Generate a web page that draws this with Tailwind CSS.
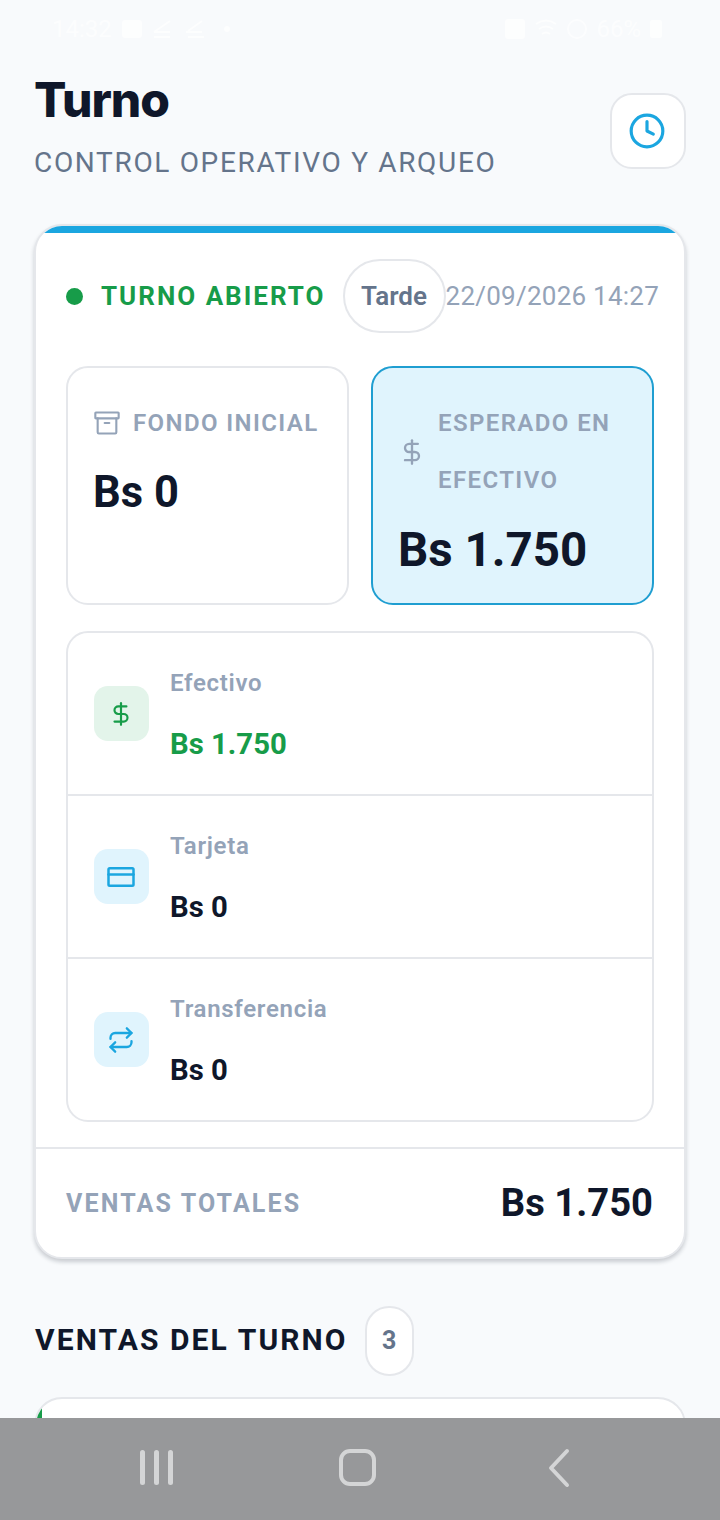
<!DOCTYPE html>
<html lang="es">
<head>
    <meta charset="UTF-8">
    <meta name="viewport" content="width=device-width, initial-scale=1.0">
    <title>Turno</title>
    <script src="https://cdn.jsdelivr.net/npm/@tailwindcss/browser@4"></script>
</head>
<body class="bg-[#f8fafc] font-['Roboto',sans-serif] text-[#0f172a]">
<div class="relative w-[720px] h-[1520px] overflow-hidden">
    <!-- Status bar -->
    <div class="flex items-center justify-between h-[58px] pl-[52px] pr-[58px] text-white/70 text-[24px]">
        <div class="flex items-center gap-[10px]">
            <span>14:32</span>
            <span class="w-[20px] h-[18px] bg-white/70 rounded-[3px]"></span>
            <svg class="w-[22px] h-[22px]" viewBox="0 0 22 22" fill="none" stroke="currentColor" stroke-width="2"><path d="M2 14 18 3M2 14h16M2 19h16"/></svg>
            <svg class="w-[22px] h-[22px]" viewBox="0 0 22 22" fill="none" stroke="currentColor" stroke-width="2"><path d="M4 13 18 3M2 14h16M4 19h16"/></svg>
            <span class="ml-[8px] w-[6px] h-[6px] rounded-full bg-white/70"></span>
        </div>
        <div class="flex items-center gap-[9px]">
            <span class="w-[20px] h-[20px] bg-white/70 rounded-[3px]"></span>
            <svg class="w-[24px] h-[22px]" viewBox="0 0 24 22" fill="none" stroke="currentColor" stroke-width="2"><path d="M2 6q10-7 20 0M5 11q7-5 14 0M8 16q4-3 8 0"/></svg>
            <span class="w-[20px] h-[20px] rounded-full border-2 border-white/60"></span>
            <span>66%</span>
            <span class="w-[12px] h-[18px] bg-white/70 rounded-[2px]"></span>
        </div>
    </div>

    <main class="px-[34px]">
        <!-- Header -->
        <header class="flex justify-between pt-[13px]">
            <div>
                <h1 class="text-[48px] leading-[58px] font-extrabold tracking-[-1px] font-['Inter',sans-serif]">Turno</h1>
                <p class="mt-[17px] text-[28px] leading-[33px] tracking-[1.67px] text-[#64748b] whitespace-nowrap">CONTROL OPERATIVO Y ARQUEO</p>
            </div>
            <button class="mt-[22px] w-[76px] h-[76px] rounded-[22px] bg-white border-2 border-[#e5e7eb] flex items-center justify-center">
                <svg class="mr-[2px] w-[38px] h-[38px] text-[#1ba6e0]" viewBox="0 0 24 24" fill="none" stroke="currentColor" stroke-width="2" stroke-linecap="round" stroke-linejoin="round"><circle cx="12" cy="12" r="10"/><path d="M12 6v6l4 2"/></svg>
            </button>
        </header>

        <!-- Shift card -->
        <section class="mt-[45px] rounded-[28px] bg-white border-2 border-[#e5e7eb] shadow-[0_3px_4px_rgba(15,23,42,0.2)] overflow-hidden">
            <div class="h-[7px] bg-[#1ba6e0]"></div>
            <div class="px-[30px]">
                <div class="flex items-center mt-[26px] h-[74px]">
                    <span class="shrink-0 w-[17px] h-[17px] rounded-full bg-[#179c49]"></span>
                    <span class="ml-[18px] text-[26px] font-bold tracking-[2px] text-[#179c49] whitespace-nowrap">TURNO ABIERTO</span>
                    <span class="shrink-0 ml-[17px] w-[103px] h-[74px] rounded-[37px] border-2 border-[#e5e7eb] flex items-center justify-center text-[26px] font-semibold text-[#64748b]">Tarde</span>
                    <span class="text-[26px] tracking-[0.25px] text-[#94a3b8] whitespace-nowrap">22/09/2026 14:27</span>
                </div>

                <div class="grid grid-cols-2 gap-[22px] mt-[33px]">
                    <div class="h-[239px] rounded-[22px] border-2 border-[#e5e7eb] p-[26px]">
                        <div class="flex items-center gap-[12px] h-[56px] mt-[1px]">
                            <svg class="-ml-[1px] w-[28px] h-[28px] shrink-0 text-[#94a3b8]" viewBox="0 0 24 24" fill="none" stroke="currentColor" stroke-width="1.8" stroke-linecap="round" stroke-linejoin="round"><rect x="2" y="3" width="20" height="5" rx="0.5"/><path d="M4 8v12a1 1 0 0 0 1 1h14a1 1 0 0 0 1-1V8"/><path d="M10 12h4"/></svg>
                            <span class="text-[24px] font-semibold tracking-[1.4px] text-[#94a3b8] whitespace-nowrap">FONDO INICIAL</span>
                        </div>
                        <p class="-ml-[1px] mt-[17px] text-[43.5px] leading-[50px] font-bold">Bs 0</p>
                    </div>
                    <div class="h-[239px] rounded-[22px] border-2 border-[#1f9ed1] bg-[#e0f4fd] px-[26px] pt-[27px]">
                        <div class="flex items-center gap-[11px]">
                            <svg class="-ml-[1px] w-[28px] h-[28px] shrink-0 text-[#94a3b8]" viewBox="0 0 24 24" fill="none" stroke="currentColor" stroke-width="2" stroke-linecap="round" stroke-linejoin="round"><path d="M12 2v20"/><path d="M17 5H9.5a3.5 3.5 0 0 0 0 7h5a3.5 3.5 0 0 1 0 7H6"/></svg>
                            <span class="ml-[1px] text-[24px] leading-[57px] font-semibold tracking-[1.4px] text-[#94a3b8]">ESPERADO EN EFECTIVO</span>
                        </div>
                        <p class="-ml-[1px] mt-[14px] text-[47.5px] leading-[54px] font-bold">Bs 1.750</p>
                    </div>
                </div>

                <!-- Payment methods -->
                <div class="mt-[26px] rounded-[22px] border-2 border-[#e5e7eb]">
                    <div class="flex items-center gap-[21px] h-[163px] px-[26px] border-b-2 border-[#e5e7eb]">
                        <span class="w-[55px] h-[55px] rounded-[14px] bg-[#e3f4ea] flex items-center justify-center">
                            <svg class="mr-[1px] w-[26px] h-[26px] text-[#179c49]" viewBox="0 0 24 24" fill="none" stroke="currentColor" stroke-width="2" stroke-linecap="round" stroke-linejoin="round"><path d="M12 2v20"/><path d="M17 5H9.5a3.5 3.5 0 0 0 0 7h5a3.5 3.5 0 0 1 0 7H6"/></svg>
                        </span>
                        <div class="mt-[3px]">
                            <p class="text-[24px] leading-[28px] font-semibold tracking-[0.7px] text-[#94a3b8]">Efectivo</p>
                            <p class="mt-[29px] text-[29.3px] leading-[36px] font-bold text-[#179c49]">Bs 1.750</p>
                        </div>
                    </div>
                    <div class="flex items-center gap-[21px] h-[163px] px-[26px] border-b-2 border-[#e5e7eb]">
                        <span class="w-[55px] h-[55px] rounded-[14px] bg-[#e0f4fd] flex items-center justify-center">
                            <svg class="mr-[1px] w-[30px] h-[30px] text-[#1ba6e0]" viewBox="0 0 24 24" fill="none" stroke="currentColor" stroke-width="2" stroke-linecap="round" stroke-linejoin="round"><rect x="2" y="5" width="20" height="14" rx="1"/><path d="M2 10h20"/></svg>
                        </span>
                        <div class="mt-[3px]">
                            <p class="text-[24px] leading-[28px] font-semibold tracking-[0.7px] text-[#94a3b8]">Tarjeta</p>
                            <p class="mt-[29px] text-[29.3px] leading-[36px] font-bold">Bs 0</p>
                        </div>
                    </div>
                    <div class="flex items-center gap-[21px] h-[161px] px-[26px]">
                        <span class="w-[55px] h-[55px] rounded-[14px] bg-[#e0f4fd] flex items-center justify-center">
                            <svg class="mr-[1px] w-[28px] h-[28px] text-[#1ba6e0]" viewBox="0 0 24 24" fill="none" stroke="currentColor" stroke-width="2" stroke-linecap="round" stroke-linejoin="round"><path d="m17 2 4 4-4 4"/><path d="M3 11v-1a4 4 0 0 1 4-4h14"/><path d="m7 22-4-4 4-4"/><path d="M21 13v1a4 4 0 0 1-4 4H3"/></svg>
                        </span>
                        <div class="mt-[3px]">
                            <p class="text-[24px] leading-[28px] font-semibold tracking-[0.7px] text-[#94a3b8]">Transferencia</p>
                            <p class="mt-[29px] text-[29.3px] leading-[36px] font-bold">Bs 0</p>
                        </div>
                    </div>
                </div>
            </div>

            <div class="mt-[25px] h-[110px] border-t-2 border-[#e5e7eb] pt-[2px] pl-[30px] pr-[31px] flex items-center justify-between">
                <span class="text-[25px] font-bold tracking-[2.15px] text-[#94a3b8]">VENTAS TOTALES</span>
                <span class="text-[38.2px] font-bold">Bs 1.750</span>
            </div>
        </section>

        <!-- Sales -->
        <div class="flex items-center mt-[47px] h-[70px]">
            <h2 class="ml-[1px] pb-[4px] text-[30px] font-bold tracking-[2.1px] whitespace-nowrap">VENTAS DEL TURNO</h2>
            <span class="ml-[17px] w-[49px] h-[70px] rounded-[24px] bg-white border-2 border-[#e5e7eb] flex items-center justify-center text-[25px] font-bold text-[#64748b]">3</span>
        </div>
        <div class="relative mt-[21px] h-[80px] rounded-[28px] bg-white border-2 border-[#e5e7eb] overflow-hidden">
            <span class="absolute left-0 top-0 w-[6px] h-full bg-[#179c49]"></span>
        </div>
    </main>

    <!-- Android nav bar -->
    <nav class="absolute left-0 bottom-0 w-full h-[102px] bg-[#97989a] flex items-center">
        <div class="absolute left-[140px] top-[32px] flex gap-[9px]">
            <span class="w-[5px] h-[35px] rounded-full bg-[#d4d5d6]"></span>
            <span class="w-[5px] h-[35px] rounded-full bg-[#d4d5d6]"></span>
            <span class="w-[5px] h-[35px] rounded-full bg-[#d4d5d6]"></span>
        </div>
        <span class="absolute left-[339px] top-[31px] w-[37px] h-[37px] rounded-[11px] border-[4px] border-[#d4d5d6]"></span>
        <svg class="absolute left-[545px] top-[30px] w-[28px] h-[40px]" viewBox="0 0 28 40" fill="none" stroke="#d4d5d6" stroke-width="4" stroke-linecap="round" stroke-linejoin="round"><path d="M22 3 6 20l16 17"/></svg>
    </nav>
</div>
</body>
</html>
